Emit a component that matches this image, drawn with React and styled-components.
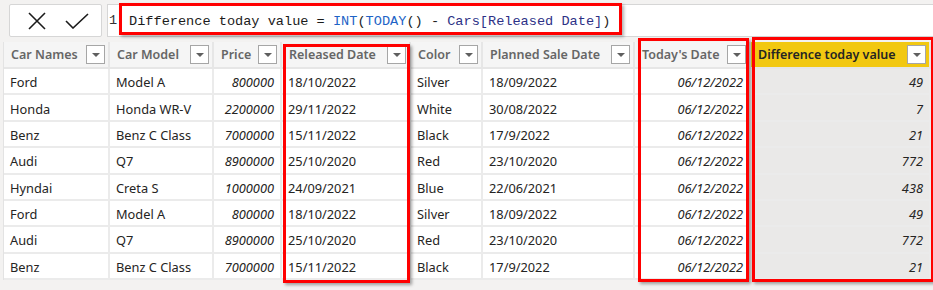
import React from "react";
import styled, { createGlobalStyle } from "styled-components";

const GlobalStyle = createGlobalStyle`
    html, body {
        margin: 0;
        padding: 0;
        background: #f3f2f1;
    }
    * {
        box-sizing: border-box;
    }
`;

const Page = styled.div`
    width: 933px;
    height: 290px;
    padding: 4px 0 0 3px;
    background: #f3f2f1;
    font-family: "Noto Sans", "Open Sans", sans-serif;
    overflow: hidden;
`;

const FormulaBar = styled.div`
    display: flex;
    align-items: stretch;
    height: 33px;
    margin-bottom: 5px;
`;

const ActionBox = styled.div`
    width: 93px;
    margin-left: 6px;
    display: flex;
    align-items: center;
    justify-content: center;
    gap: 18px;
    background: #fff;
    border: 1px solid #d6d6d6;
    border-radius: 2px;
    padding-left: 4px;
`;

const IconButton = styled.button`
    border: none;
    background: none;
    padding: 0;
    display: flex;
    cursor: pointer;
`;

const Editor = styled.div`
    flex: 1;
    margin-left: 5px;
    display: flex;
    align-items: flex-start;
    background: #fff;
    border: 1px solid #d6d6d6;
    border-right: none;
    font-family: "Liberation Mono", "DejaVu Sans Mono", monospace;
    font-size: 13.6px;
`;

const LineNo = styled.span`
    width: 10px;
    margin-left: 1px;
    padding-top: 8px;
    color: #333;
`;

const CodeLine = styled.div`
    margin-top: -2px;
    width: 503px;
    height: 32px;
    padding: 8px 0 0 7px;
    border: 3px solid #f00;
    box-shadow: 2px 2px 3px rgba(0, 0, 0, 0.3);
    color: #1b1b1b;
    white-space: pre;
`;

const Fn = styled.span`
    color: #1e63c6;
`;

const Ref = styled.span`
    color: #2d3186;
`;

const Table = styled.div`
    display: grid;
    grid-template-columns: 106px 104px 68px 129px 72px 152px 116px 180px;
    grid-template-rows: 27px repeat(8, 26.375px);
    width: 927px;
    background: #fff;
    border-left: 1px solid #e3e3e3;
`;

const HeadCell = styled.div`
    grid-row: 1;
    grid-column: ${(p) => p.$col};
    display: flex;
    align-items: center;
    justify-content: space-between;
    padding: 0 3px 0 7px;
    background: ${(p) => (p.$accent ? "#f2c811" : "#f5f5f5")};
    border-right: 2px solid #e6e6e6;
    border-bottom: 2px solid #e6e6e6;
    color: ${(p) => (p.$accent ? "#252423" : "#666666")};
    font-size: 12.5px;
    font-weight: 600;
    white-space: nowrap;
`;

const FilterBtn = styled.span`
    width: 19px;
    height: 19px;
    flex-shrink: 0;
    display: flex;
    align-items: center;
    justify-content: center;
    background: #fff;
    border: 1px solid #a6a6a6;
    &::after {
        content: "";
        border-left: 4px solid transparent;
        border-right: 4px solid transparent;
        border-top: 4px solid #5f5f5f;
    }
`;

const Cell = styled.div`
    grid-row: ${(p) => p.$row};
    grid-column: ${(p) => p.$col};
    display: flex;
    align-items: center;
    justify-content: ${(p) => (p.$right ? "flex-end" : "flex-start")};
    padding: ${(p) => (p.$right ? "2px 6px 0 0" : "2px 0 0 6px")};
    background: ${(p) => (p.$shade ? "#eae9e8" : "#fff")};
    border-right: 2px solid #ebebeb;
    border-bottom: 2px solid #ebebeb;
    color: #252423;
    font-size: 12.8px;
    font-style: ${(p) => (p.$italic ? "italic" : "normal")};
    white-space: nowrap;
`;

const Highlight = styled.div`
    grid-column: ${(p) => p.$col};
    grid-row: 1 / -1;
    margin: ${(p) => p.$m};
    border: 3px solid #f00;
    box-shadow: 2px 2px 3px rgba(0, 0, 0, 0.35);
    pointer-events: none;
    z-index: 2;
`;

const columns = [
    { name: "Car Names" },
    { name: "Car Model" },
    { name: "Price", right: true, italic: true },
    { name: "Released Date" },
    { name: "Color" },
    { name: "Planned Sale Date" },
    { name: "Today's Date", right: true, italic: true },
    { name: "Difference today value", right: true, italic: true, accent: true },
];

const rows = [
    ["Ford", "Model A", "800000", "18/10/2022", "Silver", "18/09/2022", "06/12/2022", "49"],
    ["Honda", "Honda WR-V", "2200000", "29/11/2022", "White", "30/08/2022", "06/12/2022", "7"],
    ["Benz", "Benz C Class", "7000000", "15/11/2022", "Black", "17/9/2022", "06/12/2022", "21"],
    ["Audi", "Q7", "8900000", "25/10/2020", "Red", "23/10/2020", "06/12/2022", "772"],
    ["Hyndai", "Creta S", "1000000", "24/09/2021", "Blue", "22/06/2021", "06/12/2022", "438"],
    ["Ford", "Model A", "800000", "18/10/2022", "Silver", "18/09/2022", "06/12/2022", "49"],
    ["Audi", "Q7", "8900000", "25/10/2020", "Red", "23/10/2020", "06/12/2022", "772"],
    ["Benz", "Benz C Class", "7000000", "15/11/2022", "Black", "17/9/2022", "06/12/2022", "21"],
];

function Cross() {
    return (
        <svg width="20" height="20" viewBox="0 0 20 20">
            <path d="M2 2 L18 18 M18 2 L2 18" stroke="#1b1b1b" strokeWidth="1.6" fill="none" />
        </svg>
    );
}

function Check() {
    return (
        <svg width="24" height="16" viewBox="0 0 24 16">
            <path d="M1 8 L8 15 L23 1" stroke="#1b1b1b" strokeWidth="1.6" fill="none" />
        </svg>
    );
}

function App() {
    return (
        <>
            <GlobalStyle />
            <Page>
                <FormulaBar>
                    <ActionBox>
                        <IconButton>
                            <Cross />
                        </IconButton>
                        <IconButton>
                            <Check />
                        </IconButton>
                    </ActionBox>
                    <Editor>
                        <LineNo>1</LineNo>
                        <CodeLine>
                            Difference today value = <Fn>INT</Fn>(<Fn>TODAY</Fn>() - <Ref>Cars[Released Date]</Ref>)
                        </CodeLine>
                    </Editor>
                </FormulaBar>
                <Table>
                    {columns.map((c, j) => (
                        <HeadCell key={c.name} $col={j + 1} $accent={c.accent}>
                            {c.name}
                            <FilterBtn />
                        </HeadCell>
                    ))}
                    {rows.map((r, i) =>
                        r.map((v, j) => (
                            <Cell
                                key={i + "-" + j}
                                $row={i + 2}
                                $col={j + 1}
                                $right={columns[j].right}
                                $italic={columns[j].italic}
                                $shade={columns[j].accent}
                            >
                                {v}
                            </Cell>
                        ))
                    )}
                    <Highlight $col={4} $m="2px 1px -3px 1px" />
                    <Highlight $col={7} $m="-4px 2px -2px 3px" />
                    <Highlight $col={8} $m="-5px -3px -2px 1px" />
                </Table>
            </Page>
        </>
    );
}

export default App;
